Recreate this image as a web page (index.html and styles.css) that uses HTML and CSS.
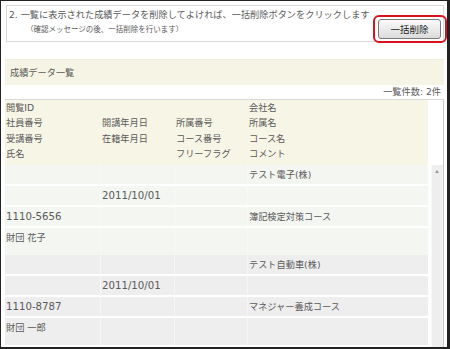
FILE: index.html
```html
<!DOCTYPE html>
<html lang="ja">
<head>
    <meta charset="UTF-8">
    <meta name="viewport" content="width=device-width, initial-scale=1.0">
    <title>成績データ一覧</title>
    <link rel="stylesheet" href="styles.css">
</head>
<body>
    <div class="frame">
        <div class="notice">
            <div class="notice-text">
                <p class="step">2. 一覧に表示された成績データを削除してよければ、一括削除ボタンをクリックします</p>
                <p class="sub">（確認メッセージの後、一括削除を行います）</p>
            </div>
            <div class="btn-wrap">
                <button class="bulk-btn">一括削除</button>
                <span class="mark"></span>
            </div>
        </div>

        <div class="title-bar">成績データ一覧</div>
        <div class="count">一覧件数: 2件</div>

        <div class="list">
            <div class="head">
                <span>閲覧ID</span><span></span><span></span><span>会社名</span>
                <span>社員番号</span><span>開講年月日</span><span>所属番号</span><span>所属名</span>
                <span>受講番号</span><span>在籍年月日</span><span>コース番号</span><span>コース名</span>
                <span>氏名</span><span></span><span>フリーフラグ</span><span>コメント</span>
            </div>
            <div class="body">
                <div class="rec odd">
                    <span></span><span></span><span></span><span>テスト電子(株)</span>
                    <span></span><span class="num">2011/10/01</span><span></span><span></span>
                    <span class="num">1110-5656</span><span></span><span></span><span>簿記検定対策コース</span>
                    <span>財団 花子</span><span></span><span></span><span></span>
                </div>
                <div class="rec even">
                    <span></span><span></span><span></span><span>テスト自動車(株)</span>
                    <span></span><span class="num">2011/10/01</span><span></span><span></span>
                    <span class="num">1110-8787</span><span></span><span></span><span>マネジャー養成コース</span>
                    <span>財団 一郎</span><span></span><span></span><span></span>
                </div>
            </div>
            <div class="scroll">
                <div class="track"><span class="arrow"></span></div>
            </div>
        </div>
    </div>
</body>
</html>
```

FILE: styles.css
```css
body {
    margin: 0;
    background: #fff;
}
.frame {
    width: 450px;
    height: 349px;
    box-sizing: border-box;
    border-style: solid;
    border-color: #222;
    border-width: 1px 3px 2px 1px;
    padding: 4px 3px 0 4px;
    color: #5a5a5a;
    font-family: "DejaVu Sans", "Noto Sans CJK JP", sans-serif;
    font-size: 9.2px;
    overflow: hidden;
}
p {
    margin: 0;
}
.notice {
    margin-left: 1px;
    height: 37px;
    box-sizing: border-box;
    border: 1px solid #d8d8d8;
    padding: 3px 2px 0 2px;
    display: flex;
    justify-content: space-between;
}
.step {
    line-height: 12px;
    white-space: nowrap;
}
.sub {
    margin-top: 3px;
    padding-left: 17px;
    line-height: 12px;
    font-size: 7.5px;
}
.btn-wrap {
    position: relative;
    align-self: flex-start;
    margin-top: 10px;
}
.bulk-btn {
    display: block;
    width: 63px;
    height: 20px;
    padding: 0;
    border: 1px solid #7a7a7a;
    border-radius: 3px;
    background: linear-gradient(#fafafa, #dcdcdc);
    color: #222;
    font-family: "Noto Sans CJK JP", sans-serif;
    font-size: 9.5px;
}
.mark {
    position: absolute;
    top: -4px;
    left: -5px;
    right: -6px;
    bottom: -4px;
    border: 2px solid #d7141d;
    border-radius: 6px;
}
.title-bar {
    margin-top: 17px;
    height: 26px;
    line-height: 26px;
    padding-left: 5px;
    background: #f6f4e4;
    border-top: 1px solid #efeddc;
    box-sizing: border-box;
}
.count {
    height: 14px;
    line-height: 13px;
    text-align: right;
    padding-right: 3px;
    border-bottom: 1px solid #d9d9d9;
}
.list {
    display: grid;
    grid-template-columns: 1fr 15px;
    border-right: 1px solid #c9c9c9;
    height: 248px;
}
.head,
.rec {
    display: grid;
    grid-template-columns: 96px 74px 73px 1fr;
}
.head {
    grid-column: 1 / 3;
    margin-right: 15px;
    background: #f7f5e6;
    padding: 1px 0 2px;
    line-height: 14.5px;
}
.head span {
    padding-left: 1px;
    white-space: nowrap;
}
.body {
    grid-column: 1;
}
.rec span {
    height: 21px;
    box-sizing: border-box;
    padding: 3px 0 0 1px;
    line-height: 13px;
    border-bottom: 2px solid #fff;
    border-right: 1px solid rgba(255, 255, 255, 0.45);
    white-space: nowrap;
}
.rec span:nth-child(n+13) {
    height: 27px;
    border-bottom: none;
}
.rec span:nth-child(4n) {
    border-right: none;
}
.odd span {
    background: #f4f6f1;
}
.even span {
    background: #eeeeee;
}
.num {
    font-size: 10.2px;
}
.scroll {
    grid-column: 2;
    padding-left: 3px;
    background: #fff;
}
.track {
    height: 100%;
    background: #eeeeee;
    border-left: 1px solid #f8f8f8;
    position: relative;
}
.arrow {
    position: absolute;
    top: 5px;
    left: 3px;
    border-left: 2.5px solid transparent;
    border-right: 2.5px solid transparent;
    border-bottom: 3px solid #9a9a9a;
}
```
